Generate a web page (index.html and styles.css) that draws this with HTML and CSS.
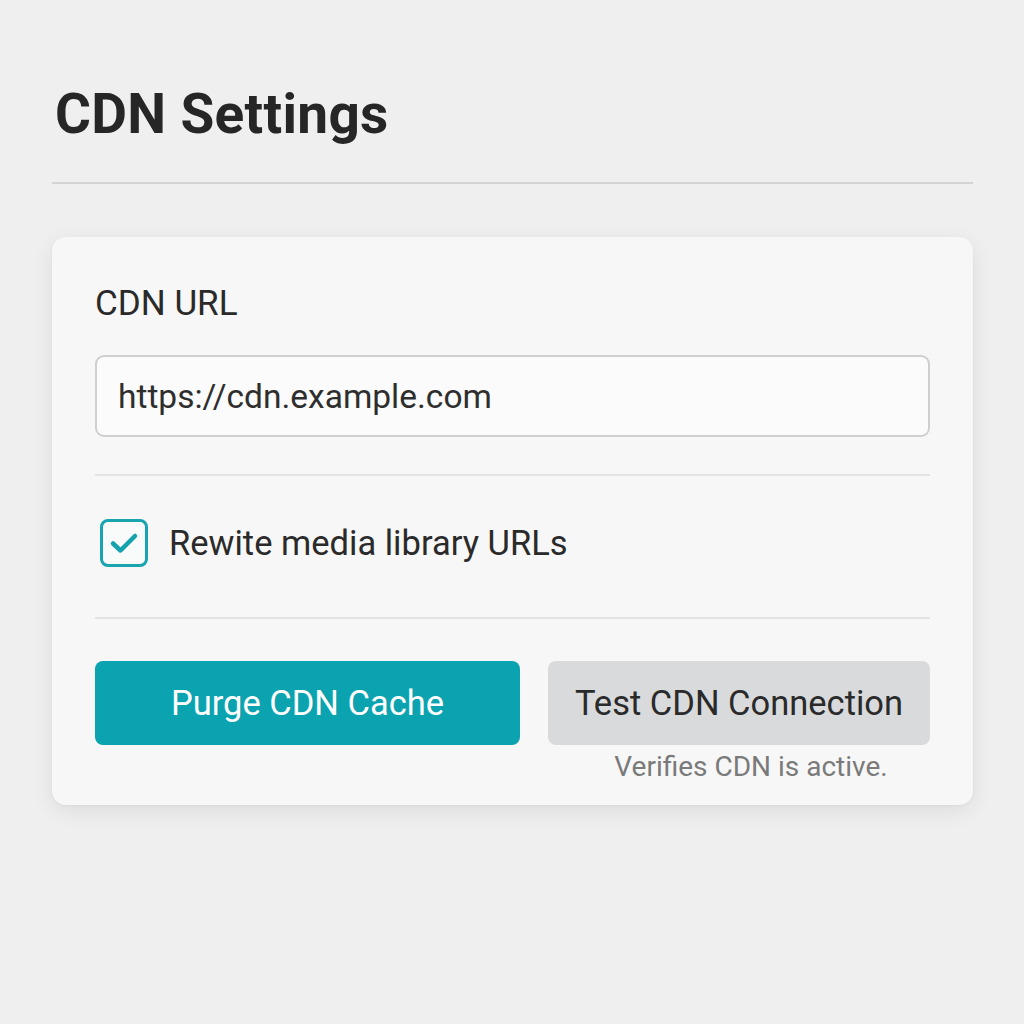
FILE: index.html
```html
<!DOCTYPE html>
<html>
<head>
<meta charset="utf-8">
<link rel="stylesheet" href="styles.css">
</head>
<body>
<div class="page">
  <h1 class="title">CDN Settings</h1>
  <div class="rule"></div>
  <div class="card">
    <div class="field">
      <label class="label">CDN URL</label>
      <div class="input">https://cdn.example.com</div>
    </div>
    <div class="sep"></div>
    <div class="check-row">
      <span class="checkbox">
        <svg width="30" height="24" viewBox="0 0 30 24"><path d="M4 12.5 L11.5 19.5 L26 5" fill="none" stroke="#14a3ae" stroke-width="4.5" stroke-linecap="round" stroke-linejoin="round"/></svg>
      </span>
      <span class="check-label">Rewite media library URLs</span>
    </div>
    <div class="sep"></div>
    <div class="actions">
      <button class="btn btn-primary">Purge CDN Cache</button>
      <div class="test-col">
        <button class="btn btn-secondary">Test CDN Connection</button>
        <div class="hint">Verifies CDN is active.</div>
      </div>
    </div>
  </div>
</div>
</body>
</html>
```
FILE: styles.css
```css
* { box-sizing: border-box; }
html, body { margin: 0; padding: 0; }
body {
  background: #efeff0;
  font-family: Roboto, "Liberation Sans", sans-serif;
  color: #2b2b2b;
  width: 1024px;
  height: 1024px;
}
.page {
  padding: 78px 51px 0 52px;
}
.title {
  margin: 0 0 0 3px;
  font-size: 55px;
  line-height: 72px;
  font-weight: 700;
  color: #262626;
  letter-spacing: 0.3px;
}
.rule {
  margin-top: 32px;
  height: 2px;
  background: #d3d3d4;
}
.card {
  margin-top: 53px;
  background: #f7f7f7;
  border-radius: 14px;
  box-shadow: 0 6px 22px rgba(0,0,0,0.08), 0 1px 3px rgba(0,0,0,0.04);
  padding: 42px 43px 22px 43px;
}
.field { display: flex; flex-direction: column; }
.label {
  font-size: 35px;
  line-height: 50px;
  color: #2a2a2a;
}
.input {
  margin-top: 26px;
  height: 82px;
  border: 2px solid #cfcfcf;
  border-radius: 9px;
  background: #fbfbfb;
  font-size: 33.5px;
  color: #2e2e2e;
  padding-left: 21px;
  display: flex;
  align-items: center;
}
.sep {
  height: 2px;
  background: #e3e3e3;
}
.field + .sep { margin-top: 37px; }
.check-row {
  display: flex;
  align-items: center;
  height: 141px;
  padding: 0 0 8px 5px;
}
.checkbox {
  width: 48px;
  height: 48px;
  border: 3px solid #19a5b0;
  border-radius: 8px;
  display: flex;
  align-items: center;
  justify-content: center;
  background: #f9fbfb;
}
.check-label {
  margin-left: 21px;
  font-size: 34.5px;
  color: #2a2a2a;
}
.actions {
  margin-top: 42px;
  display: flex;
  gap: 28px;
}
.btn {
  height: 84px;
  border: none;
  border-radius: 8px;
  font-family: Roboto, "Liberation Sans", sans-serif;
  font-size: 34.5px;
  padding: 0;
}
.btn-primary {
  width: 425px;
  background: #0ba3b0;
  color: #ffffff;
}
.test-col {
  flex: 1;
  display: flex;
  flex-direction: column;
  align-items: stretch;
}
.btn-secondary {
  width: 100%;
  background: #d9dadc;
  color: #2a2a2a;
}
.hint {
  margin-top: 6px;
  text-align: center;
  padding-left: 24px;
  font-size: 28px;
  line-height: 32px;
  color: #7a7a7a;
}
```
